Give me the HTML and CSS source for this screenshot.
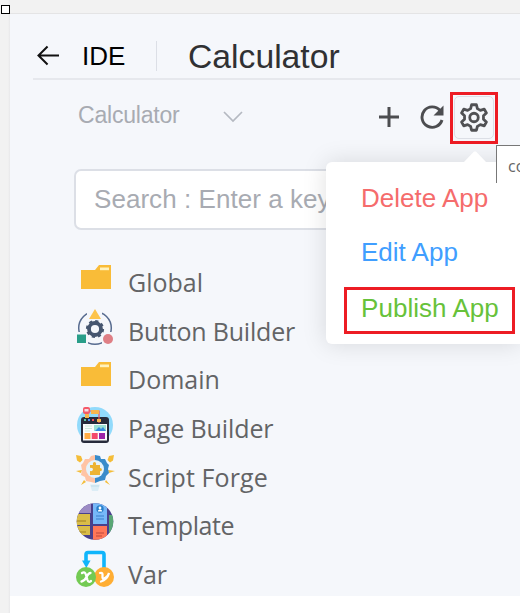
FILE: index.html
```html
<!DOCTYPE html>
<html lang="en">
<head>
<meta charset="utf-8">
<title>Calculator</title>
<link rel="stylesheet" href="styles.css">
</head>
<body>
<div class="handle"></div>
<main class="panel">
  <header class="header">
    <svg class="back" viewBox="0 0 24 22" fill="none" stroke="#111" stroke-width="2.100"><path d="M23 11H2M11 1.500 1.500 11 11 20.500"/></svg>
    <span class="ide">IDE</span>
    <span class="divider"></span>
    <h1 class="title">Calculator</h1>
  </header>
  <div class="toolbar">
    <span class="app-name">Calculator</span>
    <svg class="chevron" viewBox="0 0 20 12" fill="none" stroke="#b5b9c1" stroke-width="1.700"><path d="m1 1 9 9 9-9"/></svg>
    <div class="actions">
      <svg class="plus" viewBox="0 0 20 20" stroke="#4c4d50" stroke-width="3"><path d="M0 10h20M10 0v20"/></svg>
      <svg class="refresh" viewBox="0 0 24 24" fill="none" stroke="#4c4d50" stroke-width="2.900"><path d="M22 15A10.200 10.200 0 1 1 20 5.500"/><path d="M23.500 .5v10H13.500z" fill="#4c4d50" stroke="none"/></svg>
      <div class="settings">
        <span class="settings-button"><svg class="gear" viewBox="0 0 28 30" fill="none" stroke="#505154" stroke-width="2.900" stroke-linejoin="round"><path d="M11.500 1.800h5l1 4 3.100 1.800 4-1.300 2.200 4-3 2.900v3.600l3 2.900-2.200 4-4-1.300-3.100 1.800-1 4h-5l-1-4-3.100-1.800-4 1.300-2.200-4 3-2.900v-3.600l-3-2.900 2.200-4 4 1.300 3.100-1.800z"/><circle cx="14" cy="15" r="4.400"/></svg></span>
      </div>
    </div>
  </div>
  <div class="search">Search : Enter a key</div>
  <ul class="tree">
    <li class="node"><svg class="icon" viewBox="0 0 40 40"><path d="M5 10h14l4-5h12v24H5z" fill="#f9bc38"/><path d="M24 7.500h9v2.700h-9z" fill="#fff2bd"/></svg><span>Global</span></li>
    <li class="node button-builder"><svg class="icon" viewBox="0 0 40 40"><circle cx="19" cy="19" r="16.300" fill="none" stroke="#576b8f" stroke-width="1.500"/><path d="M11 0h15v12H11zM0 23h12v14H0zM26 23h12v14H26z" fill="#f5f7fb"/><circle cx="19" cy="20" r="6" fill="none" stroke="#46566f" stroke-width="3.800"/><circle cx="19" cy="20" r="7.900" fill="none" stroke="#46566f" stroke-width="2.400" stroke-dasharray="3.100 3.100"/><path d="m19 0 6 10H13z" fill="#fdc44c"/><path d="M1 25.500h9V34H1z" fill="#299e89"/><circle cx="32" cy="30" r="5" fill="#df7f85"/></svg><span>Button Builder</span></li>
    <li class="node"><svg class="icon" viewBox="0 0 40 40"><path d="M5 10h14l4-5h12v24H5z" fill="#f9bc38"/><path d="M24 7.500h9v2.700h-9z" fill="#fff2bd"/></svg><span>Domain</span></li>
    <li class="node page-builder"><svg class="icon" viewBox="0 0 40 40"><circle cx="19" cy="19" r="18" fill="#91dafb"/><rect x="5" y="11" width="28" height="26" rx="3" fill="#272b3b"/><path d="M7 18h24v16.500H7z" fill="#fafcfc"/><path d="M9 20h7M9 22.500h7M9 25h5" stroke="#ccebdc"/><path d="M18 19h12v6H18z" fill="#9be0d3"/><path d="m19 25 4-4 2 2 2-2 3 4z" fill="#378de0"/><path d="M8.500 27h6v6h-6z" fill="#ffad45"/><path d="M15.700 27h6v6h-6z" fill="#f34969"/><path d="M23 27h6v6h-6z" fill="#9d23a8"/><path d="M8 14h2" stroke="#5dc4a0" stroke-width="2"/><path d="M12 14h2" stroke="#4e8ff0" stroke-width="2"/><path d="M16 14h2" stroke="#f44e60" stroke-width="2"/><path d="M11 5h12v12" fill="none" stroke="#ef5560" stroke-width="1.200"/><path d="M15 4h8v4h-8z" fill="#f8b54e"/><rect x="7" y="1" width="7" height="7" rx="2" fill="#f55968"/><path d="M8.500 3h4v2.500h-4z" fill="#f6dde4"/><path d="M9 8h4v4H9zM21 13h4v3h-4z" fill="#f9b54c"/></svg><span>Page Builder</span></li>
    <li class="node script-forge"><svg class="icon" viewBox="0 0 40 40"><path d="m0 0 5 1 1.500 4-2.500 2.500-3-2zM38 0l-5 1-1.500 4 2.500 2.500 3-2zM6 15l-6 1 5 2zM32 15l7 1-6 2zM8 25l-3 5 5-3zM30 25l4 5-5-3z" fill="#f4bd39"/><path d="m19 0-4 1-2 3-4 0-2 4-2 2 1 5-1 5 4 2 1 4 5 1 4 1z" fill="#ffc4a5"/><path d="m19 0 5 1 1 3 4 0 2 4 2 2-1 4 1 4-3 3-1 4-5 1-5 2z" fill="#398bca"/><circle cx="19" cy="14" r="9" fill="#e5f3fb"/><path d="M14 10h3c-1-4 4-4 3 0h4v3c3 0 2 4 0 3v4H14v-4c4 1 4-4 0-3z" fill="#edb332"/><path d="M14 29.500h10l-2 6.500h-6z" fill="#dcedf6"/><path d="M15 31h8" stroke="#bfddea"/></svg><span>Script Forge</span></li>
    <li class="node template"><svg class="icon" viewBox="0 0 40 40"><defs><clipPath id="disc"><circle cx="19" cy="18.500" r="18.300"/></clipPath></defs><g clip-path="url(#disc)"><path d="M0 0h40v40H0z" fill="#49418c"/><path d="M0 0h15v10H0z" fill="#9c8bc4"/><path d="M0 11h14v11H0zM0 23h14v9H0z" fill="#d9bd48"/><path d="M17 0h14v21H17z" fill="#76b8f8"/><path d="M17 23h14v17H17z" fill="#ff7758"/><path d="M33 12h7v18h-7z" fill="#59a775"/><path d="M1 18h9M1 29h9" stroke="#b4942e" stroke-width="1.500"/><path d="M20 13h8M20 16h8" stroke="#3a80cb"/><path d="M20 30h8M20 33h6" stroke="#bc493c"/></g><circle cx="24" cy="6" r="3.700" fill="#277fca"/><circle cx="24" cy="5" r="1.400" fill="#fff"/><path d="M21.800 8.500c0-2.700 4.400-2.700 4.400 0z" fill="#fff"/></svg><span>Template</span></li>
    <li class="node"><svg class="icon" viewBox="0 0 40 40"><path d="M10 11V2q0-2 2-2h14q2 0 2 2v16" transform="translate(0 .5)" fill="none" stroke="#10b5fb" stroke-width="3.600"/><path d="M6 8.500h8.500L10.300 16z" fill="#10b5fb"/><circle cx="28" cy="25" r="10" fill="#ffae34"/><circle cx="10" cy="25" r="10" fill="#73ca53"/><path d="M6 21q3-2 4 2l1.500 5q1 3 3.500 1M14.500 21q-2 0-4 4t-5 4.500M24 21q3-1 2.500 3t2.500 2q3-1 4-5-2 7-8 8.500" fill="none" stroke="#fff" stroke-width="2.300" stroke-linecap="round"/></svg><span>Var</span></li>
  </ul>
</main>
<div class="menu">
  <a class="item delete">Delete App</a>
  <a class="item edit">Edit App</a>
  <a class="item publish">Publish App</a>
</div>
<div class="tooltip">co</div>
</body>
</html>
```
FILE: styles.css
```css
* { box-sizing: border-box; }
body {
  margin: 0;
  width: 520px;
  height: 613px;
  overflow: hidden;
  position: relative;
  padding: 14px 0 0 10px;
  background: linear-gradient(90deg, #f2f2f2 8px, #e8e8ea 10px, #fff 10px);
  font-family: "Liberation Sans", Arial, sans-serif;
}
.handle { position: absolute; left: 1px; top: 5px; width: 9px; height: 9px; border: 1px solid #000; background: #fff; z-index: 2; }
.panel { width: 510px; height: 582px; background: #f5f7fb; box-shadow: 0 -1px #e4e4e5, 0 -14px #f2f2f2; display: flex; flex-direction: column; }
.header { flex: none; height: 66px; margin-left: 23px; padding: 19px 0 0 4px; border-bottom: 2px solid #e6e8ed; display: flex; align-items: center; }
.back { width: 23px; height: 21px; }
.ide { margin-left: 21px; width: 53px; padding-left: 1px; font-size: 26px; line-height: 46px; color: #000; }
.divider { width: 1px; height: 30px; margin-left: 22px; background: #dcdfe6; }
.title { margin: 0 0 0 31px; font-size: 33.700px; line-height: 46px; font-weight: 400; color: #303133; }
.toolbar { flex: none; height: 72px; padding: 0 0 2px 68px; display: flex; align-items: center; }
.app-name { width: 104px; font-size: 23px; letter-spacing: -.2px; color: #a8abb2; }
.chevron { width: 20px; height: 12px; margin: 3px 0 0 41px; }
.actions { display: flex; align-items: center; margin: 3px 0 0 136px; }
.plus { width: 20px; height: 20px; }
.refresh { width: 24px; height: 24px; margin-left: 21px; }
.settings { width: 48px; height: 52px; margin: 2px 0 0 6px; padding: 1px; border: 3px solid #ed1c24; }
.settings-button { display: flex; width: 40px; height: 43px; border: 1px solid #dcdfe6; border-radius: 5px; align-items: center; justify-content: center; }
.gear { width: 28px; height: 29px; }
.search { flex: none; margin: 17px 0 0 64px; height: 61px; border: 2px solid #dcdfe6; border-radius: 7px; padding-left: 18px; background: #fff; font-size: 26px; line-height: 56px; letter-spacing: .05px; color: #a8abb2; white-space: nowrap; }
.tree { flex: none; list-style: none; margin: 30px 0 0 66px; padding: 0; display: grid; grid-auto-rows: 48.700px; font-family: "Open Sans", "Noto Sans", sans-serif; font-size: 25px; color: #636466; }
.node { display: flex; align-items: flex-start; line-height: 45px; }
.icon { width: 40px; height: 40px; margin-right: 12px; overflow: visible; }
.button-builder { letter-spacing: -.2px; }
.page-builder { letter-spacing: -.1px; }
.script-forge { letter-spacing: .1px; }
.template { letter-spacing: -.4px; }
.menu { position: absolute; left: 326px; top: 162px; width: 194px; height: 182px; padding: 9px 0 0 19px; border-radius: 6px 0 0 6px; background: #fff; box-shadow: 0 0 24px rgba(0,0,0,.13); display: flex; flex-direction: column; gap: 7px; }
.menu::before { content: ""; position: absolute; left: 137px; top: -11px; width: 24px; height: 12px; background: #fff; clip-path: polygon(0 100%, 46% 4%, 54% 4%, 100% 100%); }
.item { width: 171px; height: 47px; padding-left: 16px; font-size: 26px; line-height: 55px; }
.delete { color: #f56c6c; }
.edit { color: #409eff; }
.publish { color: #67c23a; border: 3px solid #ed1c24; margin: 8px 0 0 -1px; padding-left: 14px; line-height: 36px; letter-spacing: .05px; }
.tooltip { position: absolute; left: 496px; top: 145px; width: 24px; height: 38px; padding-left: 11px; overflow: hidden; border: 1px solid #777; border-width: 1px 0 0 1px; background: #fff; font: 16px/41px "Open Sans", sans-serif; color: #666; }
```
